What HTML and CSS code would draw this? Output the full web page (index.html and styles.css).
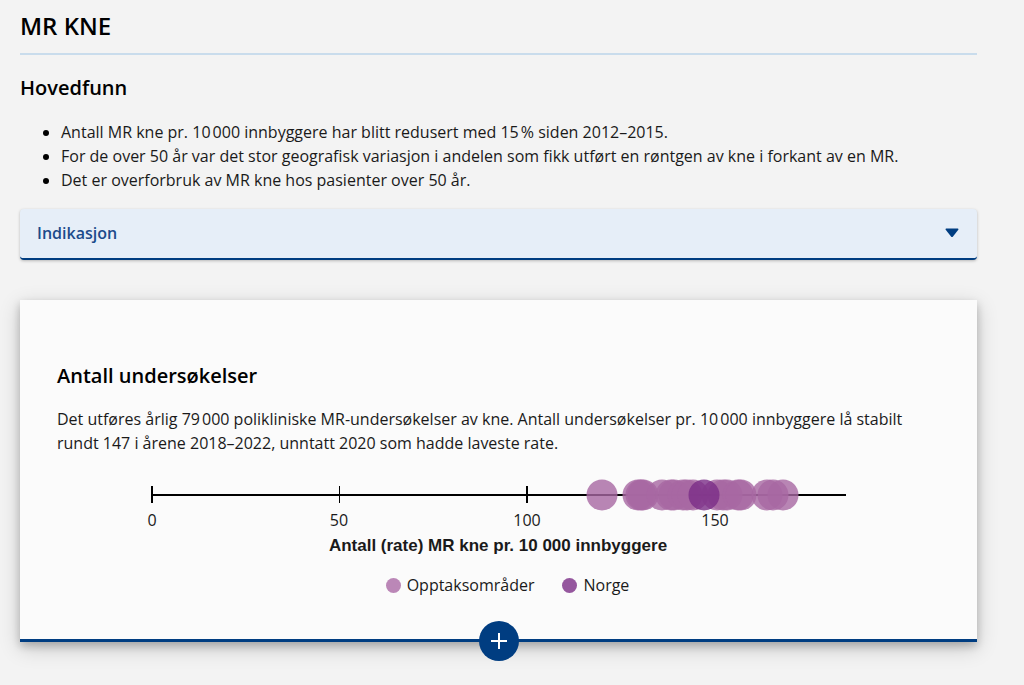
FILE: index.html
```html
<!DOCTYPE html>
<html lang="no">
<head>
<meta charset="utf-8">
<meta name="viewport" content="width=device-width, initial-scale=1">
<title>MR kne</title>
<link rel="stylesheet" href="styles.css">
</head>
<body>
<main class="page">
  <h1 class="page-title">MR KNE</h1>
  <section class="findings">
    <h2 class="heading">Hovedfunn</h2>
    <ul class="findings-list">
      <li>Antall MR kne pr. 10&#8239;000 innbyggere har blitt redusert med 15&#8239;% siden 2012–2015.</li>
      <li>For de over 50 år var det stor geografisk variasjon i andelen som fikk utført en røntgen av kne i forkant av en MR.</li>
      <li>Det er overforbruk av MR kne hos pasienter over 50 år.</li>
    </ul>
  </section>
  <button class="accordion" type="button" aria-expanded="false">
    <span>Indikasjon</span>
    <svg class="accordion-arrow" width="14" height="10" viewBox="0 0 14 10" aria-hidden="true"><path d="M1.2 .4H12.8Q14 .8 13.3 1.8L8 8.5Q7 9.5 6 8.5L.7 1.8Q0 .8 1.2 .4Z"/></svg>
  </button>
  <article class="card">
    <h2 class="heading">Antall undersøkelser</h2>
    <p class="card-text">Det utføres årlig 79&#8239;000 polikliniske MR-undersøkelser av kne. Antall undersøkelser pr. 10&#8239;000 innbyggere lå stabilt rundt 147 i årene 2018–2022, unntatt 2020 som hadde laveste rate.</p>
    <svg class="chart" viewBox="0 0 883 84" role="img" aria-label="Antall (rate) MR kne pr. 10 000 innbyggere">
      <g class="axis">
        <path d="M94 20H789"/>
        <path d="M95 11V28M470 11V28"/>
        <path class="tick-thin" d="M282.500 11V28"/>
      </g>
      <g class="areas">
        <circle cx="545" cy="20" r="15.500"/>
        <circle cx="581" cy="20" r="15.500"/>
        <circle cx="584" cy="20" r="15.500"/>
        <circle cx="586" cy="20" r="15.500"/>
        <circle cx="605" cy="20" r="15.500"/>
        <circle cx="614" cy="20" r="15.500"/>
        <circle cx="617" cy="20" r="15.500"/>
        <circle cx="626" cy="20" r="15.500"/>
        <circle cx="630" cy="20" r="15.500"/>
        <circle cx="636" cy="20" r="15.500"/>
        <circle cx="660" cy="20" r="15.500"/>
        <circle cx="666" cy="20" r="15.500"/>
        <circle cx="670" cy="20" r="15.500"/>
        <circle cx="681" cy="20" r="15.500"/>
        <circle cx="684" cy="20" r="15.500"/>
        <circle cx="710" cy="20" r="15.500"/>
        <circle cx="716" cy="20" r="15.500"/>
        <circle cx="726" cy="20" r="15.500"/>
      </g>
      <circle class="norway" cx="647" cy="20" r="15.500"/>
      <g class="tick-labels">
        <text x="95" y="51">0</text>
        <text x="282" y="51">50</text>
        <text x="470" y="51">100</text>
        <text x="658" y="51">150</text>
      </g>
      <text class="axis-title" x="441" y="76">Antall (rate) MR kne pr. 10 000 innbyggere</text>
    </svg>
    <ul class="legend">
      <li class="legend-item"><span class="dot dot-areas"></span>Opptaksområder</li>
      <li class="legend-item"><span class="dot dot-norway"></span>Norge</li>
    </ul>
    <button class="expand" type="button" aria-label="Vis mer">
      <svg width="16" height="16" viewBox="0 0 16 16" aria-hidden="true"><path d="M8 0V16M0 8H16"/></svg>
    </button>
  </article>
</main>
</body>
</html>
```
FILE: styles.css
```css
* {
  box-sizing: border-box;
}

body {
  margin: 0;
  background: #f3f3f3;
  color: #1a1a1a;
  font-family: "Open Sans", sans-serif;
  font-size: 16px;
  line-height: 24px;
}

.page {
  padding: 8px 47px 40px 20px;
}

.page-title {
  margin: 0 0 17px;
  padding-bottom: 9px;
  border-bottom: 2px solid #c9dcec;
  color: #000;
  font-size: 24px;
  font-weight: 600;
  line-height: 36px;
}

.heading {
  margin: 0;
  color: #000;
  font-size: 20px;
  font-weight: 600;
  line-height: 32px;
}

.findings-list {
  margin: 16px 0 17px;
  padding-left: 41px;
}

.findings-list li::marker {
  color: #000;
}

.accordion {
  display: flex;
  align-items: center;
  justify-content: space-between;
  width: 100%;
  height: 51px;
  padding: 0 18px 2px 17px;
  border: 0;
  border-bottom: 2px solid #003d81;
  border-radius: 4px;
  background: #e6eef8;
  box-shadow: 0 1px 3px rgb(0 0 0 / 25%);
  color: #1c4b8b;
  font: 600 16px/24px "Open Sans", sans-serif;
}

.accordion-arrow {
  fill: #003d81;
}

.card {
  position: relative;
  margin-top: 40px;
  padding: 60px 37px 42px;
  border-bottom: 3px solid #003d81;
  background: #fbfbfb;
  box-shadow: 0 4px 8px rgb(0 0 0 / 20%), 0 6px 20px rgb(0 0 0 / 19%);
}

.card-text {
  margin: 15px 0 20px;
}

.chart {
  display: block;
  width: 100%;
}

.axis path {
  fill: none;
  stroke: #000;
  stroke-width: 2;
}

.axis .tick-thin {
  stroke-width: 1;
}

.areas {
  fill: #a868a2;
  fill-opacity: 0.8;
}

.norway {
  fill: #7b2d87;
  fill-opacity: 0.8;
}

.chart text {
  fill: #1a1a1a;
  font-size: 16px;
  text-anchor: middle;
}

.chart .axis-title {
  font-family: "Liberation Sans", Arial, sans-serif;
  font-size: 17px;
  font-weight: 700;
}

.legend {
  display: flex;
  justify-content: center;
  gap: 28px;
  margin: 14px 0 0;
  padding: 0 0 0 18px;
  list-style: none;
}

.legend-item {
  display: flex;
  align-items: center;
  gap: 6px;
}

.dot {
  width: 15px;
  height: 15px;
  border-radius: 50%;
}

.dot-areas {
  background: #bb87b7;
}

.dot-norway {
  background: #95579e;
}

.expand {
  position: absolute;
  top: 100%;
  left: 50%;
  display: flex;
  align-items: center;
  justify-content: center;
  width: 40px;
  height: 40px;
  margin: -18px 0 0 -20px;
  padding: 0;
  border: 0;
  border-radius: 50%;
  background: #003d81;
}

.expand path {
  fill: none;
  stroke: #fff;
  stroke-width: 2;
}
```
